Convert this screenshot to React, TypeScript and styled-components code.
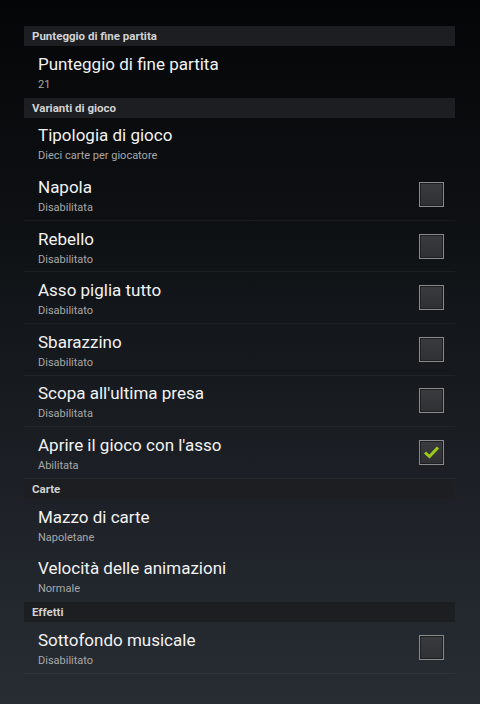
import styled, { createGlobalStyle } from "styled-components";

const GlobalStyle = createGlobalStyle`
  html, body {
    margin: 0;
    padding: 0;
  }
  body {
    font-family: Roboto, "Noto Sans", sans-serif;
    background: #050607;
  }
`;

const Screen = styled.div`
  min-height: 704px;
  box-sizing: border-box;
  padding: 26px 25px 0 24px;
  background: linear-gradient(to bottom, #040506 0%, #0f1215 35%, #1d2127 70%, #282d34 100%);
`;

const Header = styled.div`
  height: 20px;
  display: flex;
  align-items: center;
  padding-left: 8px;
  background: #1c1e21;
  color: #d2d2d2;
  font-size: 11.5px;
  font-weight: 700;
`;

const Item = styled.div<{ $divider?: boolean }>`
  height: 51.6px;
  box-sizing: border-box;
  display: flex;
  align-items: center;
  padding: 2px 11px 0 14px;
  border-bottom: 1px solid ${(p) => (p.$divider ? "rgba(255,255,255,0.045)" : "transparent")};
`;

const Texts = styled.div`
  flex: 1;
  display: flex;
  flex-direction: column;
`;

const Title = styled.div`
  font-size: 17px;
  line-height: 22px;
  color: #f2f2f2;
`;

const Summary = styled.div`
  margin-top: 3px;
  font-size: 11px;
  line-height: 14px;
  color: #a8a8a8;
`;

const Box = styled.div`
  width: 25px;
  height: 25px;
  margin-top: -2px;
  box-sizing: border-box;
  border: 1px solid #8a8a8a;
  box-shadow: inset 0 0 0 1px #1e1f21;
  background: linear-gradient(to bottom, #3a3b3e, #2f3033);
  display: flex;
  align-items: center;
  justify-content: center;
`;

type Pref = { title: string; summary: string; check?: boolean; checked?: boolean };

const sections: { name: string; items: Pref[] }[] = [
  {
    name: "Punteggio di fine partita",
    items: [{ title: "Punteggio di fine partita", summary: "21" }],
  },
  {
    name: "Varianti di gioco",
    items: [
      { title: "Tipologia di gioco", summary: "Dieci carte per giocatore" },
      { title: "Napola", summary: "Disabilitata", check: true },
      { title: "Rebello", summary: "Disabilitato", check: true },
      { title: "Asso piglia tutto", summary: "Disabilitato", check: true },
      { title: "Sbarazzino", summary: "Disabilitato", check: true },
      { title: "Scopa all'ultima presa", summary: "Disabilitata", check: true },
      { title: "Aprire il gioco con l'asso", summary: "Abilitata", check: true, checked: true },
    ],
  },
  {
    name: "Carte",
    items: [
      { title: "Mazzo di carte", summary: "Napoletane" },
      { title: "Velocità delle animazioni", summary: "Normale" },
    ],
  },
  {
    name: "Effetti",
    items: [{ title: "Sottofondo musicale", summary: "Disabilitato", check: true }],
  },
];

const Check = () => (
  <svg width="17" height="14" viewBox="0 0 17 14">
    <path d="M2 7.5 L6.5 11.5 L15 2.5" fill="none" stroke="#9ccc1a" strokeWidth="3" />
  </svg>
);

const App = () => {
  return (
    <Screen>
      <GlobalStyle />
      {sections.map((s) => (
        <div key={s.name}>
          <Header>{s.name}</Header>
          {s.items.map((it) => (
            <Item key={it.title} $divider={it.check}>
              <Texts>
                <Title>{it.title}</Title>
                <Summary>{it.summary}</Summary>
              </Texts>
              {it.check && <Box>{it.checked && <Check />}</Box>}
            </Item>
          ))}
        </div>
      ))}
    </Screen>
  );
};

export default App;
